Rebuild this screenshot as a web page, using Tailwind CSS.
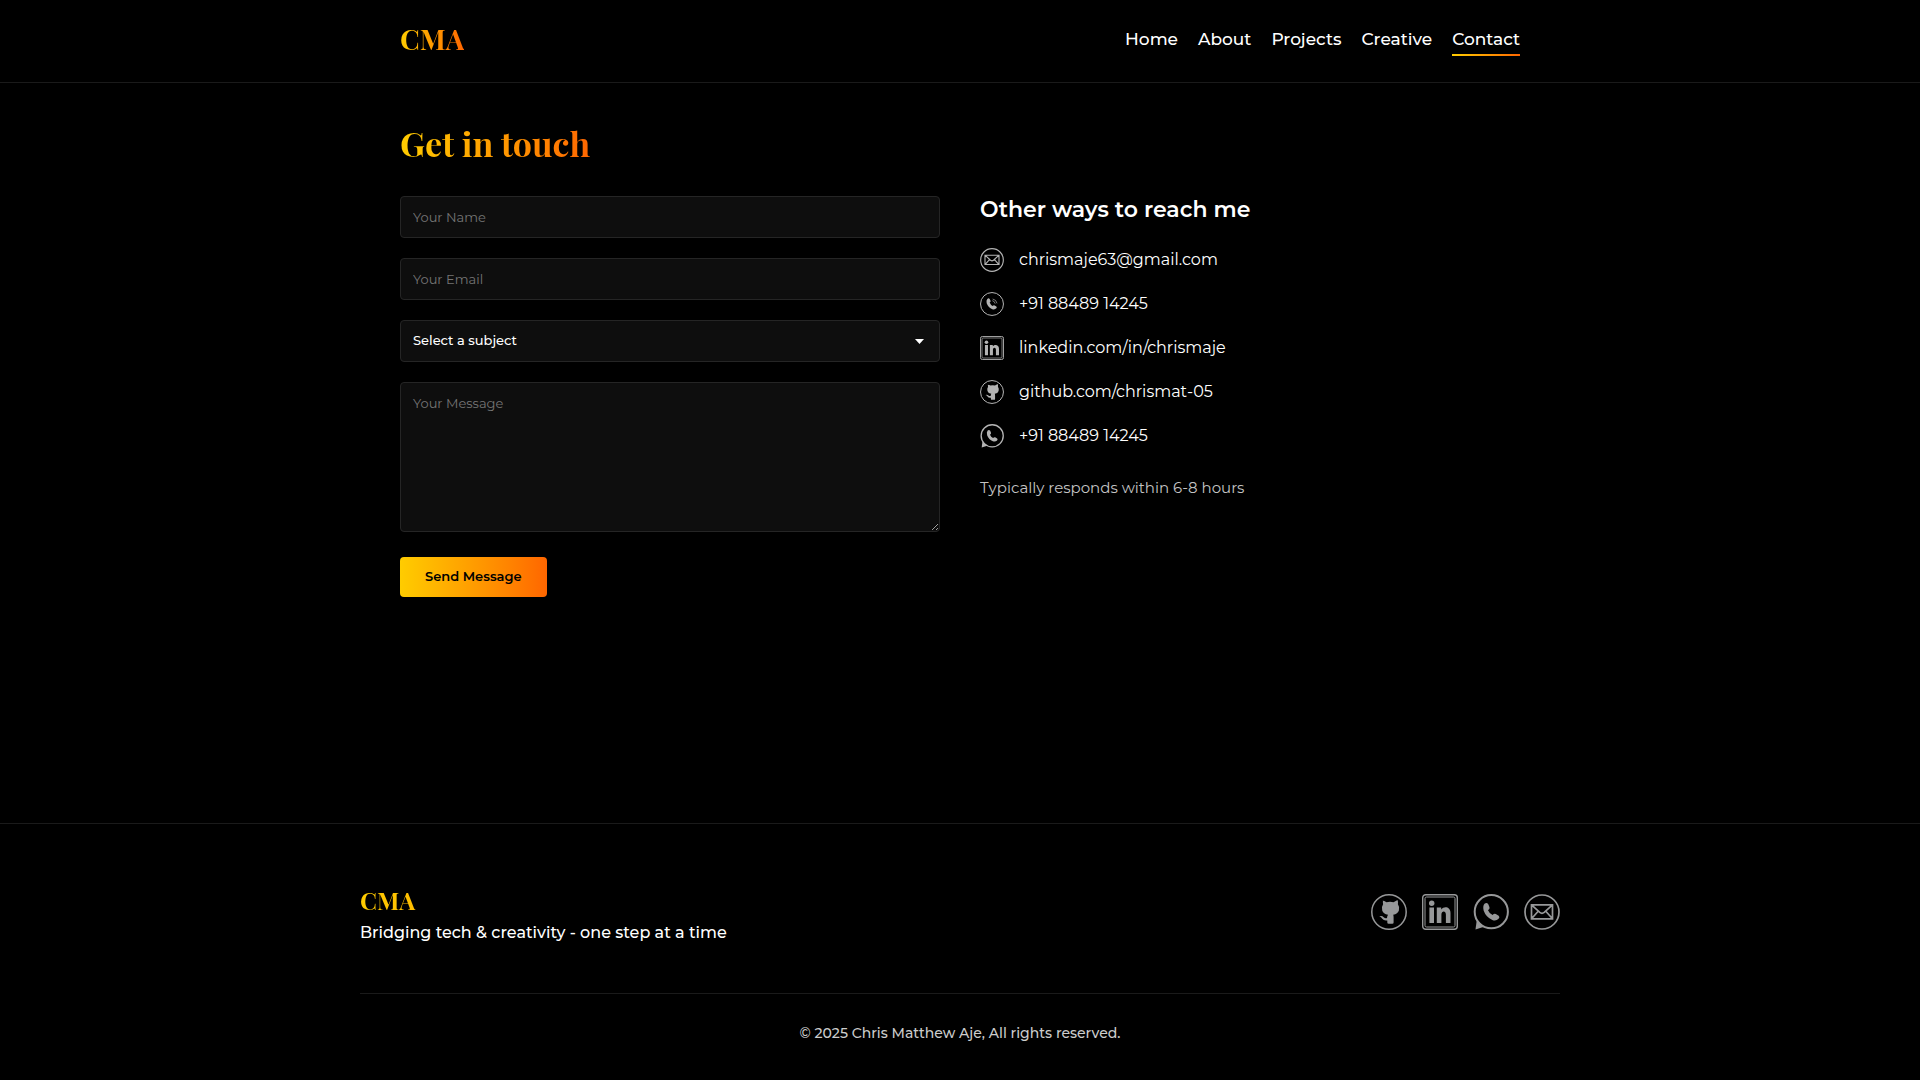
<!DOCTYPE html>
<html lang="en">
<head>
<meta charset="utf-8">
<meta name="viewport" content="width=device-width, initial-scale=1">
<title>CMA – Contact</title>
<script src="https://cdn.jsdelivr.net/npm/@tailwindcss/browser@4"></script>
</head>
<body class="flex min-h-screen flex-col bg-black font-['Montserrat','Inter',sans-serif] text-base text-white">
<svg class="hidden" aria-hidden="true">
  <symbol id="mail" viewBox="0 0 36 36"><g fill="none" stroke="currentColor" stroke-width="1.7"><circle cx="18" cy="18" r="17"/><path d="M7.500 10.800h21v14h-21zM7.500 10.800l8.300 7.600q2.200 1.800 4.400 0l8.300-7.600M7.500 24.800l6.700-7.500M28.500 24.800l-6.700-7.500"/></g></symbol>
  <symbol id="phone" viewBox="0 0 36 36"><circle cx="18" cy="18" r="17.200" fill="none" stroke="currentColor" stroke-width="1.500"/><path fill="currentColor" d="M11 10.500q2-2 3.500 0l1.300 2.500q.7 1.500-1.300 2.800 1.300 3.500 4.500 5.200 1.500-1.800 3-.8l2.500 1.500q1.500 1.200 0 2.800-2.500 2.500-6 1.200-6-2.500-8.500-9-1-4 1-6.200z"/><path fill="none" stroke="currentColor" stroke-width="1" d="M18.500 13q3.500.7 4.300 4.500M19 10.500q5.500 1 6.500 6.500"/></symbol>
  <symbol id="linkedin" viewBox="0 0 36 36"><g fill="none" stroke="currentColor"><rect x=".7" y=".7" width="34.600" height="34.600" rx="3" stroke-width="1.400"/><rect x="3" y="3" width="30" height="30" rx="1.500" stroke-width="1"/></g><g fill="currentColor"><circle cx="9.700" cy="9.300" r="2.700"/><path d="M7.400 13.500h4.600V29H7.400zM14.800 13.500h4.400v2c3-3.700 9.300-2.700 9.300 3.500v10h-4.600v-8.300c0-4.300-4.500-4-4.500 0V29h-4.600z"/></g></symbol>
  <symbol id="github" viewBox="0 0 36 36"><circle cx="18" cy="18" r="17.200" fill="none" stroke="currentColor" stroke-width="1.500"/><path fill="currentColor" d="M11.500 6l4 2.200q3.500-.7 7 0L26.500 6q.9 2 .4 4.300 2 2.700 1 6.200-1.100 3.500-5.700 4.300.4 1 .4 2.400v5.300q0 1.300-1.300 1.300h-3.700q-1.300 0-1.300-1.300V26.500q-3.500.6-5-1.700-1-1.900-3.100-2.400 2.600-1.200 4.500.8 1.500 1.400 3.300.7.100-1.700 1-3.100-4.800-.8-5.800-4.300-1-3.500.9-6.200-.6-2.300.1-4.300z"/></symbol>
  <symbol id="whatsapp" viewBox="0 0 36 36"><circle cx="18.300" cy="17.700" r="16.600" fill="none" stroke="currentColor" stroke-width="2"/><path fill="currentColor" d="M3.700 26.500L2.500 35.400l8.500-2.600z"/><path fill="currentColor" d="M11.500 9.800q2.300-1.800 3.800.5l1.200 2.900q.6 1.600-1.500 3 1.300 3.200 4.600 4.900 1.600-1.900 3.200-1.100l2.900 1.700q1.500 1.300-.1 3-2.600 2.700-6.300 1.200-6.200-2.600-8.600-9.200-1.200-4.400.8-6.900z"/></symbol>
</svg>

<header class="border-b border-[#1a1a1a]">
  <div class="mx-auto flex h-[82px] w-full max-w-[1200px] items-center justify-between px-10 pb-1">
    <a href="#" class="bg-linear-to-r from-[#ffcc00] to-[#ff6600] bg-clip-text font-['Playfair_Display','Liberation_Serif',serif] text-[28px] leading-9 font-bold text-transparent">CMA</a>
    <nav class="flex gap-5 text-[17px] leading-6 font-medium">
      <a href="#" class="py-1">Home</a>
      <a href="#" class="py-1">About</a>
      <a href="#" class="py-1">Projects</a>
      <a href="#" class="py-1">Creative</a>
      <a href="#" class="relative py-1">Contact<span class="absolute inset-x-0 -bottom-px h-0.5 bg-linear-to-r from-[#ffcc00] to-[#ff6600]"></span></a>
    </nav>
  </div>
</header>

<main class="mx-auto w-full max-w-[1200px] flex-1 px-10 pt-9">
  <h1 class="mb-[29px] w-fit bg-linear-to-r from-[#ffcc00] to-[#ff6600] bg-clip-text font-['Playfair_Display','Liberation_Serif',serif] text-[34px] leading-12 font-bold text-transparent">Get in touch</h1>
  <div class="grid grid-cols-2 gap-10">
    <form class="flex flex-col items-start gap-5 text-[13px]">
      <input type="text" aria-label="Your Name" placeholder="Your Name" class="h-[42px] w-full rounded-sm border border-[#252525] bg-[#0e0e0e] px-3 placeholder:text-[#757575]">
      <input type="email" aria-label="Your Email" placeholder="Your Email" class="h-[42px] w-full rounded-sm border border-[#252525] bg-[#0e0e0e] px-3 placeholder:text-[#757575]">
      <div class="relative w-full">
        <select aria-label="Subject" class="block h-[42px] w-full appearance-none rounded-sm border border-[#252525] bg-[#0e0e0e] px-3 font-medium text-white"><option>Select a subject</option></select>
        <svg class="pointer-events-none absolute top-[19px] right-4 h-[5px] w-[9px]" viewBox="0 0 9 5" fill="currentColor"><path d="M0 0h9L4.500 5z"/></svg>
      </div>
      <textarea aria-label="Your Message" placeholder="Your Message" class="block h-[150px] w-full rounded-sm border border-[#252525] bg-[#0e0e0e] px-3 py-[11px] placeholder:text-[#757575]"></textarea>
      <button type="submit" class="mt-[5px] h-10 rounded-sm bg-linear-to-r from-[#ffcc00] to-[#ff6600] px-[25px] font-semibold text-black">Send Message</button>
    </form>
    <section>
      <h2 class="mb-6 text-[22px] leading-7 font-semibold">Other ways to reach me</h2>
      <ul class="flex flex-col gap-5">
        <li><a href="#" class="flex items-center gap-[15px]"><svg class="size-6 text-[#b4b4b4]"><use href="#mail"/></svg>chrismaje63@gmail.com</a></li>
        <li><a href="#" class="flex items-center gap-[15px]"><svg class="size-6 text-[#b4b4b4]"><use href="#phone"/></svg>+91 88489 14245</a></li>
        <li><a href="#" class="flex items-center gap-[15px]"><svg class="size-6 text-[#b4b4b4]"><use href="#linkedin"/></svg>linkedin.com/in/chrismaje</a></li>
        <li><a href="#" class="flex items-center gap-[15px]"><svg class="size-6 text-[#b4b4b4]"><use href="#github"/></svg>github.com/chrismat-05</a></li>
        <li><a href="#" class="flex items-center gap-[15px]"><svg class="size-6 text-[#b4b4b4]"><use href="#whatsapp"/></svg>+91 88489 14245</a></li>
      </ul>
      <p class="mt-7 text-[15px] leading-6 text-[#c4c4c4]">Typically responds within 6-8 hours</p>
    </section>
  </div>
</main>

<footer class="border-t border-[#1a1a1a]">
  <div class="mx-auto w-full max-w-[1200px]">
    <div class="flex h-[169px] items-center justify-between pt-1.5">
      <div class="pt-2.5">
        <p class="bg-linear-to-r from-[#ffcc00] to-[#ff6600] bg-clip-text font-['Playfair_Display','Liberation_Serif',serif] text-[24px] leading-8 font-bold text-transparent">CMA</p>
        <p class="text-base leading-[34px] font-medium">Bridging tech &amp; creativity - one step at a time</p>
      </div>
      <div class="flex gap-[15px] text-[#979899]">
        <a href="#" aria-label="GitHub"><svg class="size-9"><use href="#github"/></svg></a>
        <a href="#" aria-label="LinkedIn"><svg class="size-9"><use href="#linkedin"/></svg></a>
        <a href="#" aria-label="WhatsApp"><svg class="size-9"><use href="#whatsapp"/></svg></a>
        <a href="#" aria-label="Email"><svg class="size-9"><use href="#mail"/></svg></a>
      </div>
    </div>
    <p class="border-t border-[#1a1a1a] pt-[27px] pb-[35px] text-center text-sm leading-6 font-medium text-[#cccccc]">© 2025 Chris Matthew Aje, All rights reserved.</p>
  </div>
</footer>
</body>
</html>
